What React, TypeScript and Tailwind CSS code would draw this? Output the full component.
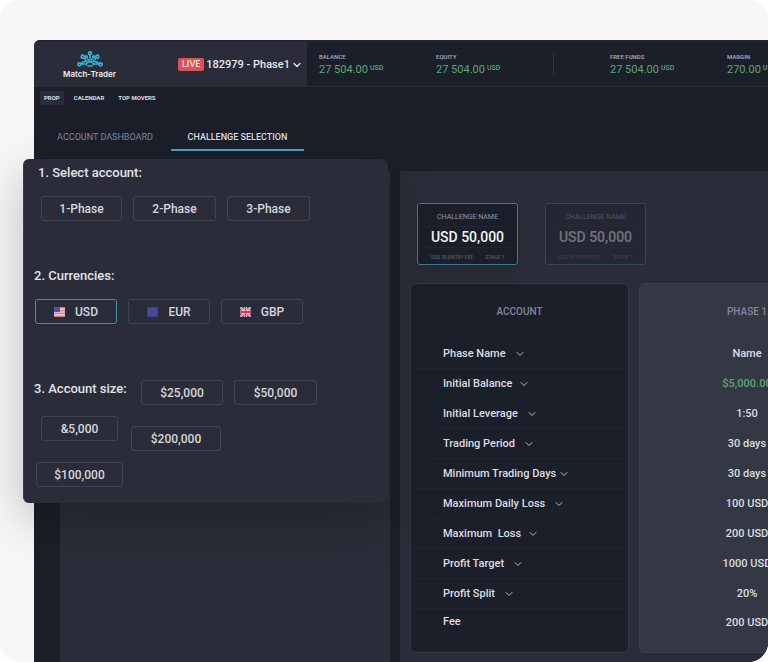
import React from "react";
import { ChevronDown } from "lucide-react";

type Stat = { label: string; value: string };

const accountStats: Stat[] = [
  { label: "BALANCE", value: "27 504.00" },
  { label: "EQUITY", value: "27 504.00" },
];
const marginStats: Stat[] = [
  { label: "FREE FUNDS", value: "27 504.00" },
  { label: "MARGIN", value: "270.00" },
];

const rules: { name: string; value: string; gap?: string; positive?: boolean }[] = [
  { name: "Phase Name", value: "Name", gap: "gap-2" },
  { name: "Initial Balance", value: "$5,000.00", gap: "gap-1.5", positive: true },
  { name: "Initial Leverage", value: "1:50", gap: "gap-2" },
  { name: "Trading Period", value: "30 days", gap: "gap-2" },
  { name: "Minimum Trading Days", value: "30 days", gap: "gap-0.5" },
  { name: "Maximum Daily Loss", value: "100 USD", gap: "gap-2" },
  { name: "Maximum\u00a0 Loss", value: "200 USD", gap: "gap-1.5" },
  { name: "Profit Target", value: "1000 USD", gap: "gap-2" },
  { name: "Profit Split", value: "20%", gap: "gap-2" },
  { name: "Fee", value: "200 USD" },
];

function Logo() {
  return (
    <svg viewBox="0 0 78 48" className="h-4 w-[26px]" fill="none" stroke="#35b3d6" strokeWidth="5">
      <path d="M39 12v16M21 21l10 12M57 21L47 33M12 39h16M66 39H50M13 36l14-6M65 36l-14-6" strokeWidth="4.5" />
      <circle cx="39" cy="7" r="4.5" />
      <circle cx="17" cy="17" r="4.5" />
      <circle cx="61" cy="17" r="4.5" />
      <circle cx="28" cy="17" r="2.5" />
      <circle cx="50" cy="17" r="2.5" />
      <circle cx="7" cy="40" r="4.5" />
      <circle cx="71" cy="40" r="4.5" />
      <path d="M30 20l6 10M48 20l-6 10" strokeWidth="4" />
      <path d="M28 43a11 11 0 0 1 22 0M31 45h16" />
    </svg>
  );
}

function FlagUS() {
  return (
    <svg viewBox="0 0 11 10" className="h-2.5 w-[11px]" aria-hidden="true">
      <rect width="11" height="10" rx="1" fill="#e5cdd1" />
      <path d="M0 .7h11M0 3.6h11M0 6.4h11M0 9.2h11" stroke="#dc7d84" strokeWidth="1.4" />
      <rect width="6" height="5" rx="1" fill="#4a53a0" />
    </svg>
  );
}

function FlagEU() {
  return (
    <svg viewBox="0 0 11 10" className="h-2.5 w-[11px]" aria-hidden="true">
      <rect width="11" height="10" rx="1" fill="#3d4593" />
      <circle cx="5.5" cy="5" r="2.8" fill="none" stroke="#858070" strokeWidth=".8" strokeDasharray=".8 .7" />
    </svg>
  );
}

function FlagGB() {
  return (
    <svg viewBox="0 0 11 10" className="h-2.5 w-[11px]" aria-hidden="true">
      <rect width="11" height="10" rx="1" fill="#3d4a96" />
      <path d="M0 0l11 10M11 0L0 10" stroke="#e9e4ea" strokeWidth="2" />
      <path d="M0 0l11 10M11 0L0 10" stroke="#d8434f" strokeWidth=".7" />
      <path d="M5.5 0v10M0 5h11" stroke="#efe9ee" strokeWidth="3.2" />
      <path d="M5.5 0v10M0 5h11" stroke="#dc3f4c" strokeWidth="1.8" />
    </svg>
  );
}

function StatCell({ label, value }: Stat) {
  return (
    <div className="w-[117px] shrink-0 pt-1 whitespace-nowrap">
      <div className="text-[6px] leading-[8px] font-semibold text-[#a3a5b5]">{label}</div>
      <div className="flex text-[11px] leading-[18px] text-[#5da577]">
        {value}
        <span className="ml-0.5 text-[7px] leading-[14px] font-medium">USD</span>
      </div>
    </div>
  );
}

function Option({
  width,
  active,
  icon,
  className = "",
  children,
}: {
  width: string;
  active?: boolean;
  icon?: React.ReactNode;
  className?: string;
  children: React.ReactNode;
}) {
  return (
    <button
      type="button"
      className={`flex h-[25px] items-center justify-center gap-2.5 rounded-[3px] border text-xs font-medium text-[#d6d7dc] ${
        active ? "border-[#4791a9]" : "border-[#41444f]"
      } ${width} ${className}`}
    >
      {icon}
      {children}
    </button>
  );
}

function ChallengeCard({ muted }: { muted?: boolean }) {
  return (
    <button
      type="button"
      className={`flex h-[62px] w-[101px] flex-col items-center rounded-[3px] border border-[#3c7c93] bg-[#1b1f2a] px-1.5 pt-2 ${
        muted ? "opacity-35" : "shadow-lg"
      }`}
    >
      <span className="text-[7px] leading-[10px] text-[#9497a8]">CHALLENGE NAME</span>
      <span className="my-1 w-full border-y border-[#232733] text-sm leading-5 font-medium text-[#f2f2f4]">
        USD 50,000
      </span>
      <span className="flex w-full justify-center gap-3 text-[5px] leading-[10px] font-medium whitespace-nowrap text-[#5a5d6c]">
        <span>USD 30 ENTRY FEE</span>
        <span>STAGE 1</span>
      </span>
    </button>
  );
}

function SetupPanel() {
  return (
    <div className="absolute -top-3 -left-[37px] w-[365px] rounded-md border-l border-[#3b3e4a] bg-[#2a2d39] pt-1 pb-4 pl-2.5 shadow-[0_16px_50px_rgba(0,0,0,0.24)]">
      <section>
        <h2 className="pl-1 text-[13px] leading-5 font-medium text-[#e2e3e6]">1. Select account:</h2>
        <div className="mt-[13px] flex gap-[11px] pl-[7px]">
          <Option width="w-[81px]">1-Phase</Option>
          <Option width="w-[83px]">2-Phase</Option>
          <Option width="w-[83px]">3-Phase</Option>
        </div>
      </section>
      <section className="mt-[45px]">
        <h2 className="text-[13px] leading-5 font-medium text-[#e2e3e6]">2. Currencies:</h2>
        <div className="mt-[13px] flex gap-[11px] pl-px">
          <Option width="w-[82px]" active icon={<FlagUS />}>USD</Option>
          <Option width="w-[82px]" icon={<FlagEU />}>EUR</Option>
          <Option width="w-[82px]" icon={<FlagGB />}>GBP</Option>
        </div>
      </section>
      <section className="mt-14 flex flex-col gap-[11px]">
        <div className="flex gap-[11px]">
          <h2 className="w-24 text-[13px] leading-[18px] font-medium whitespace-nowrap text-[#e2e3e6]">
            3. Account size:
          </h2>
          <Option width="w-[82px]">$25,000</Option>
          <Option width="w-[83px]">$50,000</Option>
        </div>
        <div className="flex items-start gap-[13px] pl-[7px]">
          <Option width="w-[77px]">&amp;5,000</Option>
          <Option width="w-[90px]" className="mt-2.5">$200,000</Option>
        </div>
        <div className="pl-0.5">
          <Option width="w-[87px]">$100,000</Option>
        </div>
      </section>
    </div>
  );
}

function RulesTable() {
  return (
    <table className="w-[465px] table-fixed border-separate border-spacing-x-[10px] border-spacing-y-0 text-[11px] font-medium text-[#dcdde1]">
      <colgroup>
        <col className="w-[219px]" />
        <col className="w-[216px]" />
      </colgroup>
      <thead>
        <tr className="h-14 text-[10px] text-[#83869a]">
          <th className="rounded-t-md border-x border-t border-[#333742] bg-[#1b1f2a] font-medium">ACCOUNT</th>
          <th className="rounded-t-md border-x border-t border-[#3c404d] bg-[#343845] font-medium">PHASE 1</th>
        </tr>
      </thead>
      <tbody>
        {rules.map((rule, i) => {
          const last = i === rules.length - 1;
          return (
            <tr key={rule.name} className={last ? "h-11" : "h-[30px]"}>
              <th
                className={`border-x border-[#333742] bg-[#1b1f2a] py-0 pl-8 text-left font-medium ${
                  last ? "rounded-b-md border-b pb-4" : "border-b border-b-[#20242f]"
                }`}
              >
                {rule.gap ? (
                  <button type="button" className={`flex items-center leading-5 ${rule.gap}`}>
                    {rule.name}
                    <ChevronDown className="size-3 text-[#b9bbc4]" strokeWidth={2} />
                  </button>
                ) : (
                  rule.name
                )}
              </th>
              <td
                className={`border-x border-[#3c404d] bg-[#343845] py-0 text-center leading-5 ${
                  last ? "rounded-b-md border-b pb-4" : "border-b border-b-[#383c49]"
                } ${rule.positive ? "text-[#5da577]" : ""}`}
              >
                {rule.value}
              </td>
            </tr>
          );
        })}
      </tbody>
    </table>
  );
}

export default function App() {
  return (
    <div className="min-h-screen bg-white font-[Roboto,sans-serif]">
      <div className="flex min-h-screen flex-col overflow-hidden rounded-[20px] bg-[#f7f7f7] pt-10 pl-[34px]">
        <div className="flex flex-1 flex-col rounded-tl-md bg-[#1b1f2a]">
          <header className="flex h-[47px] overflow-hidden rounded-tl-md border-t-2 border-[#212431]">
            <div className="flex w-[273px] shrink-0 items-center bg-[#2a2d39]">
              <div className="flex w-[111px] shrink-0 flex-col items-center">
                <Logo />
                <span className="mt-0.5 font-[Inter,sans-serif] text-[8px] leading-[10px] font-semibold text-[#eeeef1]">
                  Match-Trader
                </span>
              </div>
              <span className="ml-[33px] rounded-xs bg-[#d9525a] px-1 text-[9px] leading-[13px] font-medium text-[#f3dfe1]">
                LIVE
              </span>
              <button
                type="button"
                className="ml-0.5 flex items-center gap-px text-[11px] leading-4 font-medium whitespace-nowrap text-[#e8e8eb]"
              >
                182979 - Phase1
                <ChevronDown className="size-3" strokeWidth={2.5} />
              </button>
            </div>
            <div className="flex min-w-0 flex-1 items-center overflow-hidden border-b border-[#2a2d39] pl-3">
              {accountStats.map((s) => (
                <StatCell key={s.label} {...s} />
              ))}
              <div className="mr-14 h-[22px] w-px shrink-0 bg-[#343743]" />
              {marginStats.map((s) => (
                <StatCell key={s.label} {...s} />
              ))}
            </div>
          </header>

          <nav className="mt-1 flex items-center gap-2.5 pl-1.5 text-[6px] leading-[14px] font-bold text-[#dddee2]">
            <a href="#prop" className="rounded-xs bg-[#2a2d39] px-1">PROP</a>
            <a href="#calendar">CALENDAR</a>
            <a href="#movers" className="ml-1">TOP MOVERS</a>
          </nav>

          <div role="tablist" className="mt-5 flex pl-2 text-[9px] leading-[24px]">
            <button role="tab" aria-selected="false" className="w-[126px] border-b-2 border-transparent text-[#83869a]">
              ACCOUNT DASHBOARD
            </button>
            <button role="tab" aria-selected="true" className="ml-[3px] w-[133px] border-b-2 border-[#4fa0bd] font-medium text-[#dddee2]">
              CHALLENGE SELECTION
            </button>
          </div>

          <main className="mt-5 flex flex-1 gap-2.5 pl-[26px]">
            <div className="relative z-10 w-[330px] shrink-0 bg-[#2a2d39]">
              <SetupPanel />
            </div>
            <div className="min-w-0 flex-1 overflow-hidden bg-[#2a2d39] pt-8 pb-2">
              <div className="flex gap-[27px] pl-[17px]">
                <ChallengeCard />
                <ChallengeCard muted />
              </div>
              <div className="mt-[18px]">
                <RulesTable />
              </div>
            </div>
          </main>
        </div>
      </div>
    </div>
  );
}
